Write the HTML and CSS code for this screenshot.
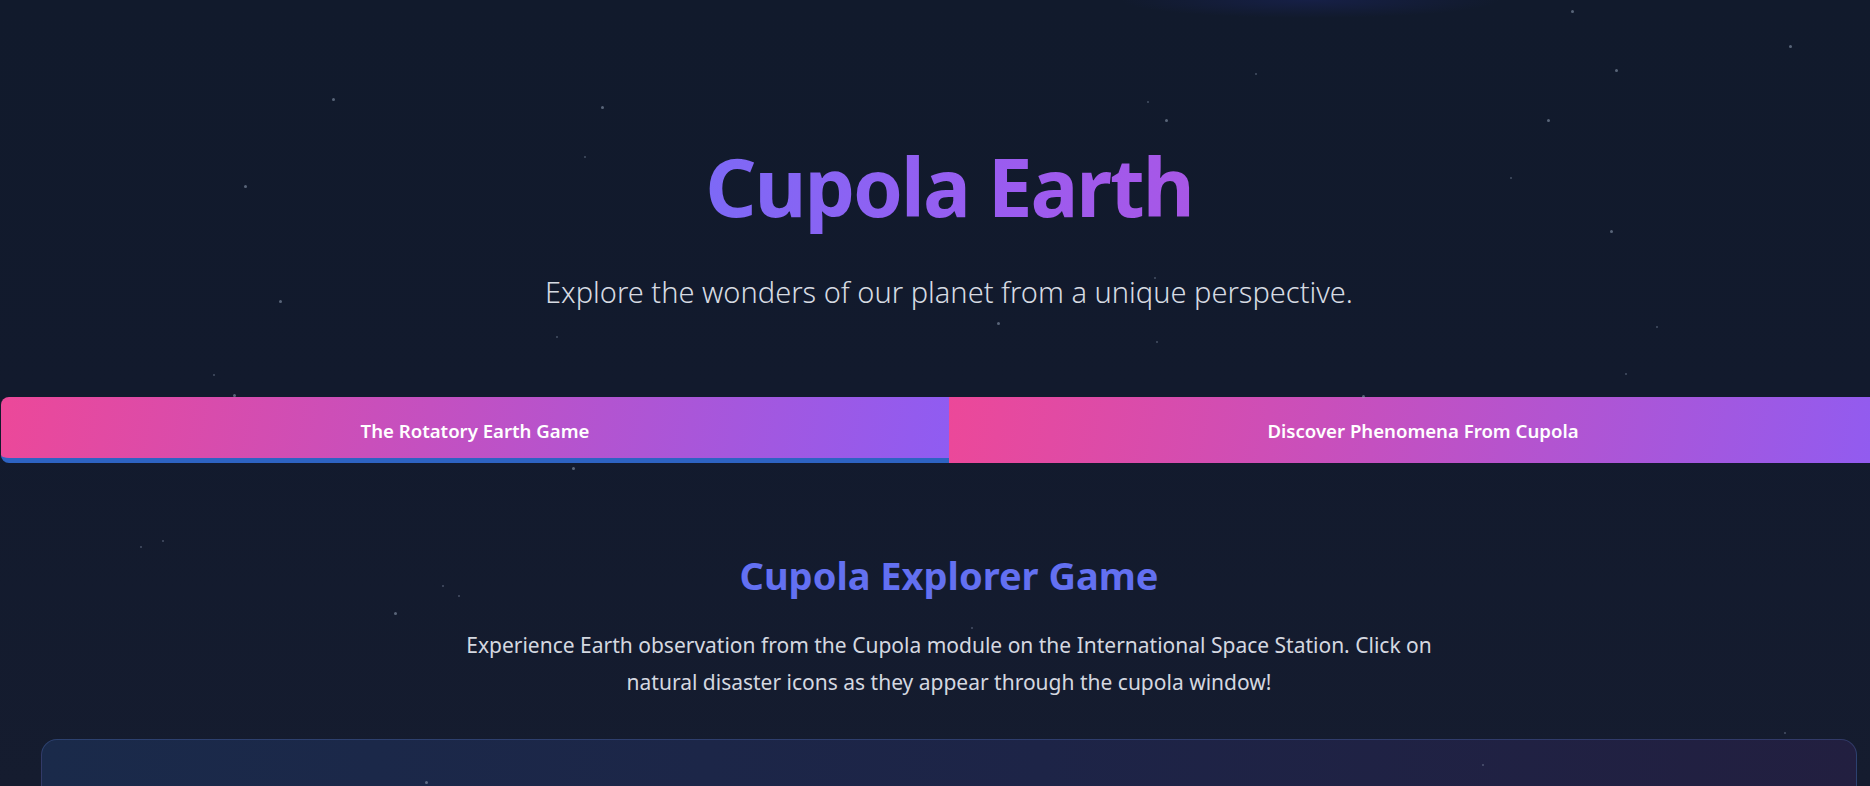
FILE: index.html
```html
<!DOCTYPE html>
<html lang="en">
<head>
<meta charset="utf-8">
<title>Cupola Earth</title>
<link rel="stylesheet" href="styles.css">
</head>
<body>
<div class="page">
  <div class="stars">
    <i class="star" style="left:332px;top:98px"></i>
    <i class="star" style="left:601px;top:106px"></i>
    <i class="star" style="left:244px;top:185px"></i>
    <i class="star sm" style="left:584px;top:156px"></i>
    <i class="star" style="left:279px;top:300px"></i>
    <i class="star sm" style="left:556px;top:336px"></i>
    <i class="star" style="left:1571px;top:10px"></i>
    <i class="star" style="left:1789px;top:45px"></i>
    <i class="star" style="left:1615px;top:69px"></i>
    <i class="star sm" style="left:1255px;top:73px"></i>
    <i class="star" style="left:1165px;top:119px"></i>
    <i class="star sm" style="left:1147px;top:101px"></i>
    <i class="star" style="left:1547px;top:119px"></i>
    <i class="star sm" style="left:1510px;top:177px"></i>
    <i class="star" style="left:1610px;top:230px"></i>
    <i class="star sm" style="left:1154px;top:277px"></i>
    <i class="star" style="left:997px;top:322px"></i>
    <i class="star sm" style="left:1156px;top:341px"></i>
    <i class="star sm" style="left:1656px;top:326px"></i>
    <i class="star sm" style="left:1625px;top:373px"></i>
    <i class="star sm" style="left:213px;top:374px"></i>
    <i class="star" style="left:233px;top:394px"></i>
    <i class="star" style="left:1362px;top:395px"></i>
    <i class="star" style="left:572px;top:467px"></i>
    <i class="star sm" style="left:140px;top:546px"></i>
    <i class="star sm" style="left:162px;top:540px"></i>
    <i class="star sm" style="left:442px;top:585px"></i>
    <i class="star sm" style="left:458px;top:595px"></i>
    <i class="star" style="left:394px;top:612px"></i>
    <i class="star sm" style="left:971px;top:627px"></i>
    <i class="star sm" style="left:1784px;top:732px"></i>
    <i class="star sm" style="left:1482px;top:764px"></i>
    <i class="star" style="left:425px;top:781px"></i>
  </div>

  <header class="hero">
    <h1 class="hero-title">Cupola Earth</h1>
    <p class="hero-sub">Explore the wonders of our planet from a unique perspective.</p>
  </header>

  <nav class="tabs">
    <button class="tab tab-active">The Rotatory Earth Game</button>
    <button class="tab">Discover Phenomena From Cupola</button>
  </nav>

  <section class="game">
    <h2 class="game-title">Cupola Explorer Game</h2>
    <p class="game-desc">Experience Earth observation from the Cupola module on the International Space Station. Click on natural disaster icons as they appear through the cupola window!</p>
    <div class="game-card"></div>
  </section>
</div>
</body>
</html>
```

FILE: styles.css
```css
html, body {
  margin: 0;
  padding: 0;
  height: 786px;
  overflow: hidden;
}

body {
  background:
    radial-gradient(ellipse 190px 18px at 1310px 0, rgba(30, 40, 110, 0.4), rgba(17, 24, 39, 0) 100%),
    linear-gradient(180deg, #111a2c 0%, #121a2d 50%, #151c2f 100%);
  font-family: "Noto Sans", "Open Sans", sans-serif;
  color: #d1d5db;
}

.page {
  position: relative;
  width: 1896px;
  margin-left: 1px;
}

.stars {
  position: absolute;
  left: -1px;
  top: 0;
  width: 1870px;
  height: 786px;
  pointer-events: none;
  z-index: 2;
}

.star {
  position: absolute;
  width: 3px;
  height: 3px;
  border-radius: 50%;
  background: rgba(148, 163, 184, 0.55);
}

.star.sm {
  width: 2px;
  height: 2px;
  background: rgba(148, 163, 184, 0.4);
}

.hero {
  display: flex;
  flex-direction: column;
  align-items: center;
  padding-top: 138px;
}

.hero-title {
  margin: 0;
  font-size: 80px;
  line-height: 96px;
  font-weight: 700;
  letter-spacing: -2px;
  background: linear-gradient(90deg, #7d69f6 0%, #9a5cf0 60%, #a857e6 100%);
  -webkit-background-clip: text;
  background-clip: text;
  color: transparent;
}

.hero-sub {
  margin: 38px 0 0;
  font-size: 29px;
  line-height: 40px;
  font-weight: 300;
  color: #d6dae2;
}

.tabs {
  display: flex;
  margin-top: 85px;
}

.tab {
  flex: 1;
  height: 66px;
  box-sizing: border-box;
  border: 0;
  padding: 0;
  margin: 0;
  background: linear-gradient(100deg, #ec4899 0%, #c450c0 45%, #8f5cf2 100%);
  color: #ffffff;
  font-family: inherit;
  font-size: 18.6px;
  font-weight: 600;
  cursor: pointer;
}

.tab-active {
  border-radius: 8px 0 0 8px;
  border-bottom: 5px solid #2d63c2;
  padding-top: 5px;
}

.game {
  display: flex;
  flex-direction: column;
  align-items: center;
  padding: 0 40px;
}

.game-title {
  margin: 89px 0 0;
  font-size: 38px;
  line-height: 46px;
  font-weight: 700;
  color: #6370f1;
}

.game-desc {
  margin: 29px 0 0;
  max-width: 1010px;
  text-align: center;
  font-size: 21px;
  line-height: 37px;
  font-weight: 400;
  color: #d4d8e0;
}

.game-card {
  align-self: stretch;
  margin-top: 38px;
  height: 420px;
  border: 1px solid rgba(80, 110, 180, 0.35);
  border-radius: 16px;
  background: linear-gradient(90deg, #1a2a4a 0%, #1d2447 55%, #221f40 100%);
}
```
